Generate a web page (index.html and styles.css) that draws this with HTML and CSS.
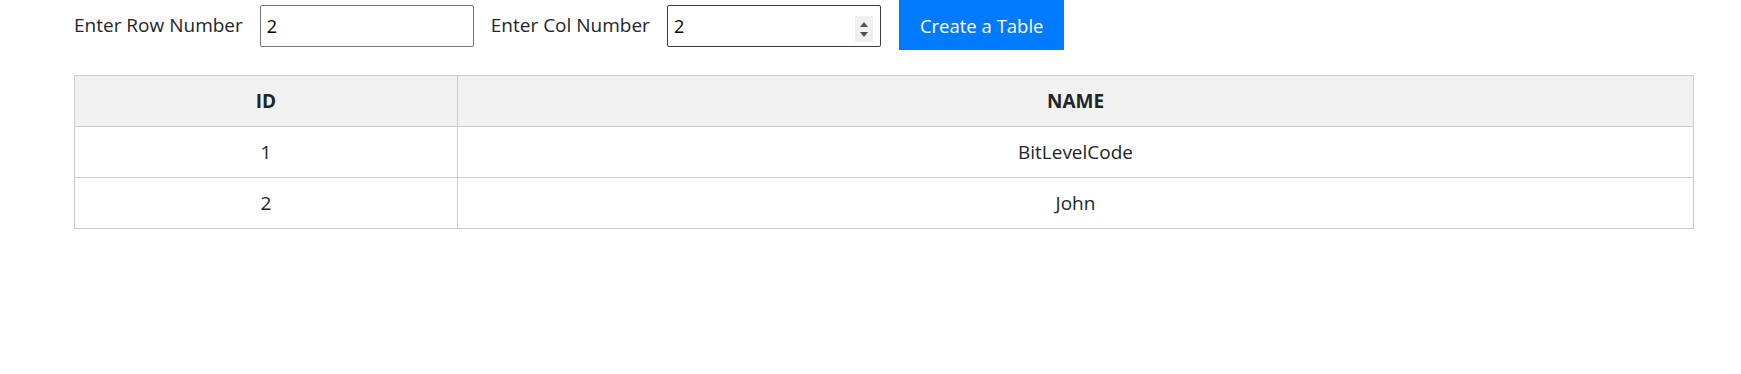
FILE: index.html
```html
<!DOCTYPE html>
<html lang="en">
<head>
    <meta charset="UTF-8">
    <meta name="viewport" content="width=device-width, initial-scale=1.0">
    <title>Dynamic Table</title>
    <link rel="stylesheet" href="styles.css">
</head>
<body>
    <div class="page">
        <div class="controls">
            <label for="rows">Enter Row Number</label>
            <input type="text" id="rows" class="num-input" value="2">
            <label for="cols">Enter Col Number</label>
            <span class="spin-wrap">
                <input type="number" id="cols" class="num-input hovered" value="2">
                <span class="spinner">
                    <span class="arrow-up"></span>
                    <span class="arrow-down"></span>
                </span>
            </span>
            <button class="create-btn">Create a Table</button>
        </div>

        <table class="data-table">
            <thead>
                <tr>
                    <th class="col-id">ID</th>
                    <th>NAME</th>
                </tr>
            </thead>
            <tbody>
                <tr>
                    <td>1</td>
                    <td>BitLevelCode</td>
                </tr>
                <tr>
                    <td>2</td>
                    <td>John</td>
                </tr>
            </tbody>
        </table>
    </div>
</body>
</html>
```

FILE: styles.css
```css
body {
    margin: 0;
    background: #fff;
    color: #212529;
    font-family: "Open Sans", "Noto Sans", sans-serif;
    font-size: 19px;
}

.page {
    padding-left: 74px;
    width: 1620px;
}

.controls {
    display: flex;
    align-items: center;
    gap: 17px;
    height: 50px;
}

.num-input {
    box-sizing: border-box;
    width: 214px;
    height: 42px;
    padding: 0 6px;
    border: 1px solid #767676;
    border-radius: 2px;
    font-family: inherit;
    font-size: 18px;
    color: #000;
    margin-top: 2px;
    display: block;
}

.num-input.hovered {
    border-color: #3b3b3b;
}

.num-input::-webkit-inner-spin-button,
.num-input::-webkit-outer-spin-button {
    -webkit-appearance: none;
    margin: 0;
}

.spin-wrap {
    position: relative;
    display: block;
}

.spinner {
    position: absolute;
    right: 8px;
    top: 13px;
    width: 18px;
    height: 26px;
    background: #efefef;
    display: flex;
    flex-direction: column;
    align-items: center;
    justify-content: center;
    gap: 5px;
}

.arrow-up,
.arrow-down {
    width: 0;
    height: 0;
    border-left: 4px solid transparent;
    border-right: 4px solid transparent;
}

.arrow-up {
    border-bottom: 5px solid #505050;
}

.arrow-down {
    border-top: 5px solid #505050;
}

.create-btn {
    height: 50px;
    padding: 0 21px;
    background: #007bff;
    color: #fff;
    border: none;
    font-family: inherit;
    font-size: 18.5px;
    margin-left: 1px;
    cursor: pointer;
}

.data-table {
    margin-top: 25px;
    width: 100%;
    border-collapse: collapse;
    border: 1px solid #ccc;
}

.data-table th,
.data-table td {
    border: 1px solid #ccc;
    height: 50px;
    padding: 0;
    text-align: center;
}

.data-table th {
    background: #f1f1f1;
    font-weight: bold;
}

.col-id {
    width: 382px;
}
```
